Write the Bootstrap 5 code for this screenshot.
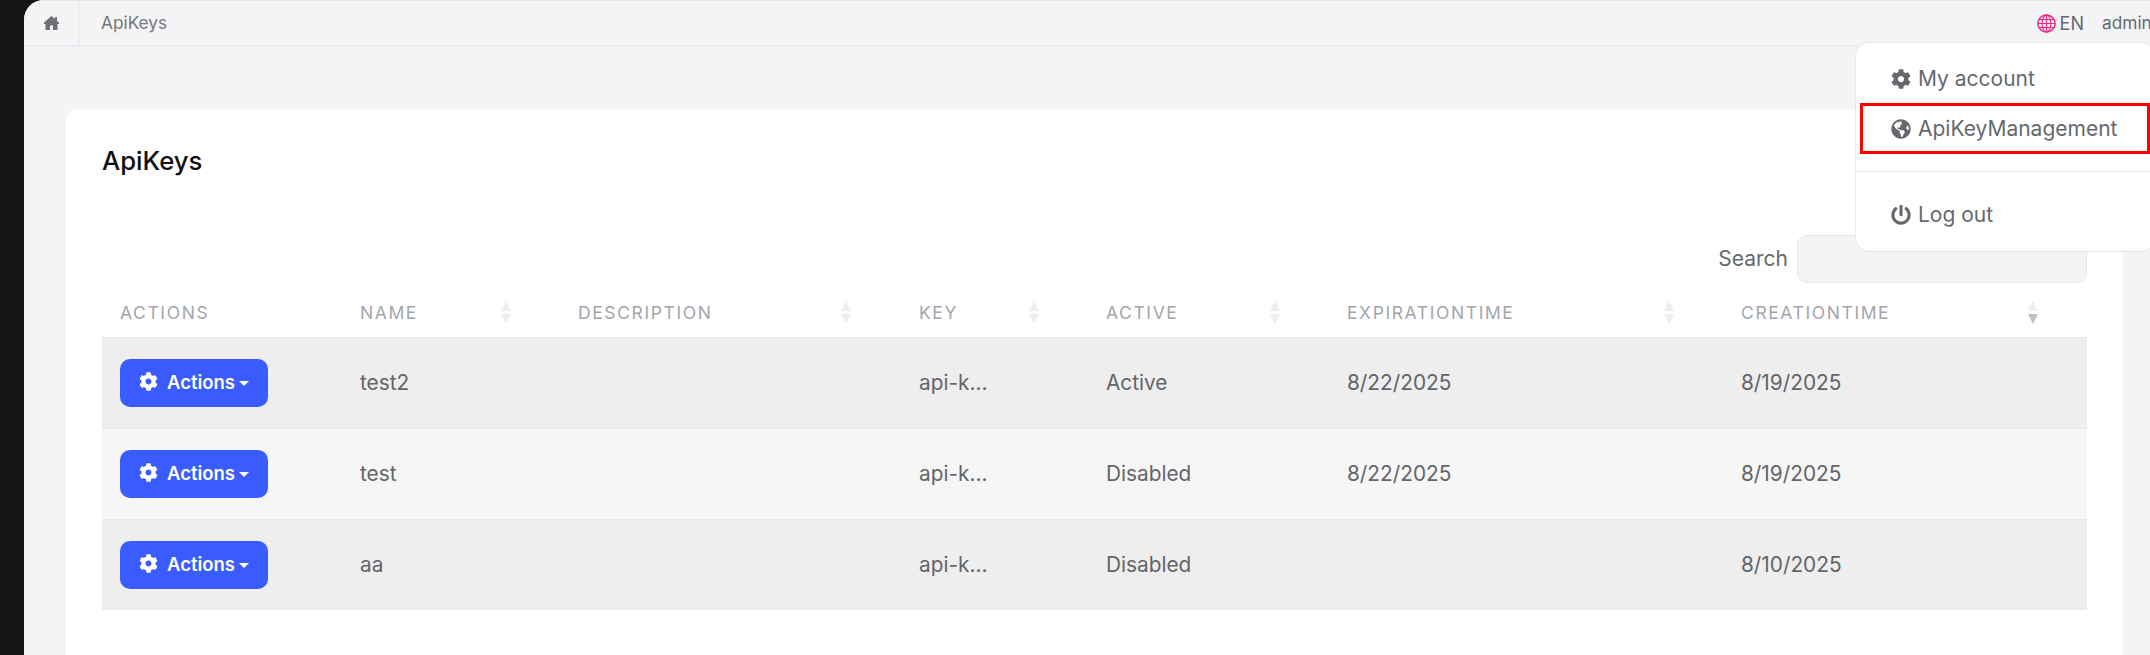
<!DOCTYPE html>
<html lang="en">

<head>
    <meta charset="UTF-8">
    <meta name="viewport" content="width=device-width, initial-scale=1.0">
    <title>ApiKeys</title>
    <link href="https://cdn.jsdelivr.net/npm/bootstrap@5.3.2/dist/css/bootstrap.min.css" rel="stylesheet">
    <style>
        html, body {
            height: 100%;
        }

        body {
            background-color: #141414;
            font-family: "Inter", "Liberation Sans", sans-serif;
            overflow: hidden;
        }

        .app-shell {
            background-color: #f4f4f6;
            border-top-left-radius: 20px;
            margin-left: 24px;
            height: 655px;
            overflow: hidden;
            position: relative;
        }

        .top-bar {
            height: 47px;
            background-color: #f4f4f6;
            border-top: 1px solid #e6e6ea;
            border-bottom: 2px solid #ecedf0;
            color: #6c7075;
            font-size: 17.3px;
        }

        .home-cell {
            width: 56px;
            border-right: 2px solid #ecedf0;
        }

        .crumb-text {
            margin-left: 21px;
            color: #75787d;
        }

        .lang-text {
            color: #666b73;
            font-size: 18px;
        }

        .user-text {
            color: #666b73;
            width: 48px;
            margin-left: 18px;
            overflow: hidden;
            white-space: nowrap;
        }

        .page-wrap {
            padding: 62px 27px 0 42px;
        }

        .key-card {
            background-color: #fff;
            border-radius: 12px;
            padding: 32px 36px 0 36px;
            height: 560px;
        }

        .key-title {
            font-size: 25.7px;
            font-weight: 500;
            color: #101014;
            line-height: 40px;
            margin-bottom: 54px;
        }

        .search-row {
            height: 48px;
        }

        .search-label {
            font-size: 21px;
            color: #65696e;
            margin-right: 9px;
        }

        .search-box {
            width: 290px;
            height: 48px;
            background-color: #f4f4f6;
            border: 1px solid #e7e8ec;
            border-radius: 10px;
        }

        .key-table {
            table-layout: fixed;
            width: 1985px;
            margin: 7px 0 0;
            font-size: 20.8px;
            color: #626569;
        }

        .key-table th {
            height: 47px;
            padding: 0 0 0 18px;
            font-size: 17.5px;
            font-weight: 400;
            letter-spacing: 1.6px;
            color: #a3a5ad;
            background: #fff;
            border-bottom: 1px solid #e7e8ec;
            position: relative;
            vertical-align: middle;
        }

        .key-table td {
            height: 91px;
            padding: 0 0 0 18px;
            vertical-align: middle;
            border-bottom: 1px solid #e7e8ec;
            color: #626569;
        }

        .key-table tr.row-dark td {
            background-color: #eeeeee;
        }

        .key-table tr.row-light td {
            background-color: #f6f6f6;
        }

        .key-table tr:last-child td {
            border-bottom: 0;
        }

        .sort-mark {
            position: absolute;
            top: 11px;
            width: 10px;
        }

        .sort-mark svg {
            display: block;
        }

        .btn-actions {
            width: 148px;
            height: 48px;
            padding: 0;
            background-color: #3a5cff;
            border: 0;
            border-radius: 10px;
            color: #fff;
            font-size: 18.5px;
            font-weight: 600;
        }

        .btn-actions:hover {
            background-color: #3a5cff;
            color: #fff;
        }

        .btn-actions svg {
            margin-right: 9px;
            vertical-align: -2px;
        }

        .btn-actions.dropdown-toggle::after {
            border-top-width: 5px;
            border-left-width: 5.5px;
            border-right-width: 5.5px;
            margin-left: 4px;
            vertical-align: 3px;
        }

        .user-menu {
            position: absolute;
            left: 1831px;
            top: 42px;
            width: 300px;
            height: 210px;
            background-color: #fff;
            border: 1px solid #e7e8ec;
            border-radius: 14px;
            font-size: 21px;
            color: #65696e;
        }

        .menu-entry {
            display: flex;
            align-items: center;
            gap: 7px;
            padding-left: 35px;
            height: 50px;
            color: #65696e;
            text-decoration: none;
        }

        .menu-entry svg {
            flex: none;
        }

        .menu-entry-first {
            margin-top: 11px;
        }

        .menu-entry-marked {
            margin: -1px 0 0 4px;
            width: 290px;
            height: 51px;
            padding-left: 28px;
            border: 3px solid #f00;
        }

        .menu-line {
            border-top: 1px solid #e7e8ec;
            margin-top: 17px;
            margin-bottom: 18px;
        }
    </style>
</head>

<body>
    <div class="app-shell">
        <!-- Top bar -->
        <div class="top-bar d-flex align-items-center">
            <div class="home-cell h-100 d-flex align-items-center justify-content-center">
                <svg width="15" height="14" viewBox="0 0 15 14" fill="#6c7075"><path d="M7.5 0L0 6.5V8H1.5V14H6V9.5H9V14H13.5V8H15V6.5L13 4.7V1H11V3Z"/></svg>
            </div>
            <span class="crumb-text">ApiKeys</span>
            <div class="ms-auto d-flex align-items-center">
                <svg class="globe-mark" width="19" height="19" viewBox="0 0 19 19" fill="none" stroke="#f0287f" stroke-width="1.1"><circle cx="9.5" cy="9.5" r="8.6" stroke-width="1.5"/><ellipse cx="9.5" cy="9.5" rx="4.4" ry="8.6"/><path d="M9.5 1v17M1.5 5.5h16M1 9.5h17M1.5 13.5h16"/></svg>
                <span class="lang-text ms-1">EN</span>
                <span class="user-text">admin</span>
            </div>
        </div>

        <!-- Page content -->
        <div class="page-wrap">
            <div class="key-card">
                <div class="key-title">ApiKeys</div>
                <div class="search-row d-flex justify-content-end align-items-center">
                    <label class="search-label">Search</label>
                    <div class="search-box"></div>
                </div>
                <table class="key-table">
                    <colgroup id="keyCols"></colgroup>
                    <thead>
                        <tr id="keyHead"></tr>
                    </thead>
                    <tbody id="keyBody"></tbody>
                </table>
            </div>
        </div>

        <!-- User menu -->
        <div class="user-menu">
            <a class="menu-entry menu-entry-first" href="#">
                <svg width="20" height="20" viewBox="0 0 512 512" fill="#65696e"><path d="M487.4 315.7l-42.6-24.6c4.3-23.2 4.3-47 0-70.2l42.6-24.6c4.9-2.8 7.1-8.6 5.5-14-11.1-35.6-30-67.8-54.7-94.6-3.8-4.1-10-5.1-14.8-2.3L380.8 110c-17.9-15.4-38.5-27.3-60.8-35.1V25.8c0-5.6-3.9-10.5-9.4-11.7-36.7-8.2-74.3-7.8-109.2 0-5.5 1.2-9.4 6.1-9.4 11.7V75c-22.2 7.9-42.8 19.8-60.8 35.1L88.7 85.5c-4.9-2.8-11-1.9-14.8 2.3-24.7 26.7-43.6 58.9-54.7 94.6-1.7 5.4.6 11.2 5.5 14L67.3 221c-4.3 23.2-4.3 47 0 70.2l-42.6 24.6c-4.9 2.8-7.1 8.6-5.5 14 11.1 35.6 30 67.8 54.7 94.6 3.8 4.1 10 5.1 14.8 2.3l42.6-24.6c17.9 15.4 38.5 27.3 60.8 35.1v49.2c0 5.6 3.9 10.5 9.4 11.7 36.7 8.2 74.3 7.8 109.2 0 5.5-1.2 9.4-6.1 9.4-11.7v-49.2c22.2-7.9 42.8-19.8 60.8-35.1l42.6 24.6c4.9 2.8 11 1.9 14.8-2.3 24.7-26.7 43.6-58.9 54.7-94.6 1.5-5.5-.7-11.3-5.6-14.1zM256 336c-44.1 0-80-35.9-80-80s35.9-80 80-80 80 35.9 80 80-35.9 80-80 80z"/></svg>
                My account
            </a>
            <a class="menu-entry menu-entry-marked" href="#">
                <svg width="20" height="20" viewBox="0 0 496 512" fill="#65696e"><path d="M248 8C111.03 8 0 119.03 0 256s111.03 248 248 248 248-111.03 248-248S384.97 8 248 8zm82.29 357.6c-3.9 3.88-7.99 7.95-11.31 11.28-2.99 3-5.1 6.7-6.17 10.71-1.51 5.66-2.73 11.38-4.77 16.87l-17.39 46.85c-13.76 3-28 4.69-42.65 4.69v-27.38c1.69-12.62-7.64-36.26-22.63-51.25-6-6-9.37-14.14-9.37-22.63v-32.01c0-11.64-6.27-22.34-16.46-27.97-14.37-7.95-34.81-19.06-48.81-26.11-11.48-5.78-22.1-13.14-31.65-21.75l-.8-.72a114.792 114.792 0 0 1-18.06-20.74c-9.38-13.77-24.66-36.42-34.59-51.14 20.47-45.5 57.36-82.04 103.2-101.89l24.01 12.01C203.48 89.74 216 82.01 216 70.11v-11.3c7.99-1.29 16.12-2.11 24.39-2.42l28.3 28.3c6.25 6.25 6.25 16.38 0 22.63L264 112l-10.34 10.34c-3.12 3.12-3.12 8.19 0 11.31l4.69 4.69c3.12 3.12 3.12 8.19 0 11.31l-8 8a8.008 8.008 0 0 1-5.66 2.34h-8.99c-2.08 0-4.08.81-5.58 2.27l-9.92 9.65a8.008 8.008 0 0 0-1.58 9.31l15.59 31.19c2.66 5.32-1.21 11.58-7.15 11.58h-5.64c-1.93 0-3.79-.7-5.24-1.96l-9.28-8.06a16.017 16.017 0 0 0-15.55-3.1l-31.17 10.39a11.95 11.95 0 0 0-8.17 11.34c0 4.53 2.56 8.66 6.61 10.69l11.08 5.54c9.41 4.71 19.79 7.16 30.31 7.16s22.59 27.29 32 32h66.75c8.49 0 16.62 3.37 22.63 9.37l13.69 13.69a30.503 30.503 0 0 1 8.93 21.57 46.536 46.536 0 0 1-13.72 32.98zM417 274.25c-5.79-1.45-10.84-5-14.15-9.97l-17.98-26.97a23.97 23.97 0 0 1 0-26.62l19.59-29.38c2.32-3.47 5.5-6.28 9.24-8.14l12.98-6.49C440.2 193.59 448 223.87 448 256c0 8.67-.74 17.16-1.82 25.54L417 274.25z"/></svg>
                ApiKeyManagement
            </a>
            <div class="menu-line"></div>
            <a class="menu-entry" href="#">
                <svg width="20" height="20" viewBox="0 0 512 512" fill="#65696e"><path d="M400 54.1c63 45 104 118.6 104 201.9 0 136.8-110.8 247.7-247.5 248C120 504.3 8.2 393 8 256.4 7.9 173.1 48.9 99.3 111.8 54.2c11.7-8.3 28-4.8 35 7.7L162.6 90c5.9 10.5 3.1 23.8-6.6 31-41.5 30.8-68 79.6-68 134.9-.1 92.3 74.5 168.1 168 168.1 91.6 0 168.6-74.2 168-169.1-.3-51.8-24.7-101.8-68.1-134-9.7-7.2-12.4-20.5-6.5-30.9l15.8-28.1c7-12.4 23.2-16.1 34.8-7.8zM296 264V24c0-13.3-10.7-24-24-24h-32c-13.3 0-24 10.7-24 24v240c0 13.3 10.7 24 24 24h32c13.3 0 24-10.7 24-24z"/></svg>
                Log out
            </a>
        </div>
    </div>

    <script src="https://cdn.jsdelivr.net/npm/bootstrap@5.3.2/dist/js/bootstrap.bundle.min.js"></script>
    <script>
        // column widths, and how far the sort arrows sit from the column's left edge
        const columns = [
            { name: 'ACTIONS', width: 240 },
            { name: 'NAME', width: 218, sort: 159 },
            { name: 'DESCRIPTION', width: 341, sort: 281 },
            { name: 'KEY', width: 187, sort: 128 },
            { name: 'ACTIVE', width: 241, sort: 182 },
            { name: 'EXPIRATIONTIME', width: 394, sort: 335 },
            { name: 'CREATIONTIME', width: 364, sort: 305, active: true }
        ];

        const rows = [
            ['test2', '', 'api-k...', 'Active', '8/22/2025', '8/19/2025'],
            ['test', '', 'api-k...', 'Disabled', '8/22/2025', '8/19/2025'],
            ['aa', '', 'api-k...', 'Disabled', '', '8/10/2025']
        ];

        const gear = 'M487.4 315.7l-42.6-24.6c4.3-23.2 4.3-47 0-70.2l42.6-24.6c4.9-2.8 7.1-8.6 5.5-14-11.1-35.6-30-67.8-54.7-94.6-3.8-4.1-10-5.1-14.8-2.3L380.8 110c-17.9-15.4-38.5-27.3-60.8-35.1V25.8c0-5.6-3.9-10.5-9.4-11.7-36.7-8.2-74.3-7.8-109.2 0-5.5 1.2-9.4 6.1-9.4 11.7V75c-22.2 7.9-42.8 19.8-60.8 35.1L88.7 85.5c-4.9-2.8-11-1.9-14.8 2.3-24.7 26.7-43.6 58.9-54.7 94.6-1.7 5.4.6 11.2 5.5 14L67.3 221c-4.3 23.2-4.3 47 0 70.2l-42.6 24.6c-4.9 2.8-7.1 8.6-5.5 14 11.1 35.6 30 67.8 54.7 94.6 3.8 4.1 10 5.1 14.8 2.3l42.6-24.6c17.9 15.4 38.5 27.3 60.8 35.1v49.2c0 5.6 3.9 10.5 9.4 11.7 36.7 8.2 74.3 7.8 109.2 0 5.5-1.2 9.4-6.1 9.4-11.7v-49.2c22.2-7.9 42.8-19.8 60.8-35.1l42.6 24.6c4.9 2.8 11 1.9 14.8-2.3 24.7-26.7 43.6-58.9 54.7-94.6 1.5-5.5-.7-11.3-5.6-14.1zM256 336c-44.1 0-80-35.9-80-80s35.9-80 80-80 80 35.9 80 80-35.9 80-80 80z';

        document.getElementById('keyCols').innerHTML = columns.map(c => `<col style="width:${c.width}px">`).join('');

        document.getElementById('keyHead').innerHTML = columns.map(c => {
            let arrows = '';
            if (c.sort) {
                const down = c.active ? '#bfc0c4' : '#eeeef0';
                arrows = `<span class="sort-mark" style="left:${c.sort}px"><svg width="10" height="23" viewBox="0 0 10 23"><path d="M5 0l5 10H0z" fill="#eeeef0"/><path d="M0 13h10l-5 10z" fill="${down}"/></svg></span>`;
            }
            return `<th>${c.name}${arrows}</th>`;
        }).join('');

        document.getElementById('keyBody').innerHTML = rows.map((r, i) => `
            <tr class="${i % 2 === 0 ? 'row-dark' : 'row-light'}">
                <td><button class="btn btn-actions dropdown-toggle"><svg width="19" height="19" viewBox="0 0 512 512" fill="#fff"><path d="${gear}"/></svg>Actions</button></td>
                ${r.map(v => `<td>${v}</td>`).join('')}
            </tr>`).join('');
    </script>
</body>

</html>
